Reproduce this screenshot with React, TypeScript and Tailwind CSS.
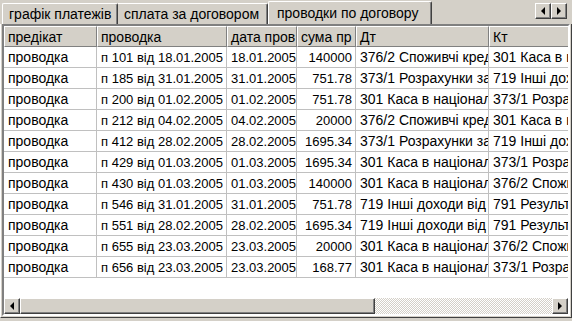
import React from 'react'

type Row = [string, string, string, string, string, string]

const rows: Row[] = [
  ['проводка', 'п 101 від 18.01.2005', '18.01.2005', '140000', '376/2 Споживчі кредити', '301 Каса в національній валюті'],
  ['проводка', 'п 185 від 31.01.2005', '31.01.2005', '751.78', '373/1 Розрахунки за', '719 Інші доходи від'],
  ['проводка', 'п 200 від 01.02.2005', '01.02.2005', '751.78', '301 Каса в національній', '373/1 Розрахунки'],
  ['проводка', 'п 212 від 04.02.2005', '04.02.2005', '20000', '376/2 Споживчі кредити', '301 Каса в національній'],
  ['проводка', 'п 412 від 28.02.2005', '28.02.2005', '1695.34', '373/1 Розрахунки за', '719 Інші доходи від'],
  ['проводка', 'п 429 від 01.03.2005', '01.03.2005', '1695.34', '301 Каса в національній', '373/1 Розрахунки'],
  ['проводка', 'п 430 від 01.03.2005', '01.03.2005', '140000', '301 Каса в національній', '376/2 Споживчі кредити'],
  ['проводка', 'п 546 від 31.01.2005', '31.01.2005', '751.78', '719 Інші доходи від операцій', '791 Результат'],
  ['проводка', 'п 551 від 28.02.2005', '28.02.2005', '1695.34', '719 Інші доходи від операцій', '791 Результат'],
  ['проводка', 'п 655 від 23.03.2005', '23.03.2005', '20000', '301 Каса в національній', '376/2 Споживчі кредити'],
  ['проводка', 'п 656 від 23.03.2005', '23.03.2005', '168.77', '301 Каса в національній', '373/1 Розрахунки'],
]

const headers = ['предікат', 'проводка', 'дата пров', 'сума пр', 'Дт', 'Кт']
const widths = ['w-[93px]', 'w-[130px]', 'w-[70px]', 'w-[59px]', 'w-[133px]', 'w-[90px]']
// кирилиця в оригіналі ширша за Arial, цифри вужчі
const sizes = ['text-[14px]', 'text-[13px]', 'text-[13px]', 'text-[13px]', 'text-[14px]', 'text-[14px]']

function Arrow({ dir }: { dir: 'left' | 'right' }) {
  return (
    <svg width="4" height="8" viewBox="0 0 4 8">
      {dir === 'left' ? <path d="M4 0 L0 4 L4 8 Z" fill="#000" /> : <path d="M0 0 L4 4 L0 8 Z" fill="#000" />}
    </svg>
  )
}

function Btn({ dir }: { dir: 'left' | 'right' }) {
  return (
    <div className="w-[16px] h-[16px] bg-[#d4d0c8] border border-t-white border-l-white border-r-[#404040] border-b-[#404040] shadow-[inset_-1px_-1px_0_#808080] flex items-center justify-center shrink-0">
      <Arrow dir={dir} />
    </div>
  )
}

export default function App() {
  return (
    <div className="w-[572px] h-[321px] bg-[#d4d0c8] overflow-hidden text-[13px] text-black font-['Liberation_Sans',Arial,sans-serif] leading-none">
      {/* вкладки */}
      <div className="h-[24px] flex items-end pl-[2px] text-[14px]">
        <div className="w-[116px] h-[21px] pl-[6px] flex items-center border-t border-l border-white border-r border-r-[#404040] rounded-tl-[2px] rounded-tr-[2px] shadow-[inset_-1px_0_0_#808080] whitespace-nowrap">
          графік платежів
        </div>
        <div className="w-[150px] h-[21px] pl-[6px] flex items-center border-t border-white border-r border-r-[#404040] rounded-tr-[2px] shadow-[inset_-1px_0_0_#808080] whitespace-nowrap">
          сплата за договором
        </div>
        <div className="w-[164px] h-[23px] pl-[8px] flex items-center border-t border-l border-white border-r border-r-[#404040] rounded-tl-[2px] rounded-tr-[2px] shadow-[inset_-1px_0_0_#808080] whitespace-nowrap">
          проводки по договору
        </div>
        <div className="flex-1" />
        <div className="flex self-start mt-[3px] mr-[5px]">
          <Btn dir="left" />
          <Btn dir="right" />
        </div>
      </div>

      {/* сторінка вкладки */}
      <div className="h-[294px] border-l border-white border-r border-r-[#404040] border-b border-b-[#404040] pl-[1px] pr-[1px] pb-[1px]">
        <div className="h-full border-2 border-t-[#808080] border-l-[#808080] border-r-white border-b-white bg-white flex flex-col overflow-hidden">
          <div className="flex-1 overflow-hidden">
            <div className="flex h-[21px] bg-[#d4d0c8] text-[14px]">
              {headers.map((h, i) => (
                <div
                  key={h}
                  className={`${widths[i]} shrink-0 h-full border-t border-l border-white border-r border-r-[#808080] border-b border-b-[#808080] pl-[3px] flex items-center overflow-hidden whitespace-nowrap`}
                >
                  {h}
                </div>
              ))}
            </div>
            {rows.map((r, ri) => (
              <div key={ri} className="flex h-[21px]">
                {r.map((c, ci) => (
                  <div
                    key={ci}
                    className={`${widths[ci]} ${sizes[ci]} shrink-0 h-full border-r border-b border-[#c0c0c0] flex items-center overflow-hidden whitespace-nowrap ${ci === 3 ? 'justify-end pr-[3px]' : 'pl-[4px]'}`}
                  >
                    {c}
                  </div>
                ))}
              </div>
            ))}
          </div>

          {/* горизонтальна прокрутка */}
          <div className="h-[16px] flex shrink-0">
            <Btn dir="left" />
            <div className="w-[355px] h-full bg-[#d4d0c8] border border-t-white border-l-white border-r-[#404040] border-b-[#404040] shadow-[inset_-1px_-1px_0_#808080]" />
            <div className="flex-1 h-full bg-[repeating-conic-gradient(#ffffff_0_25%,#d4d0c8_0_50%)] bg-[length:2px_2px]" />
            <Btn dir="right" />
          </div>
        </div>
      </div>
    </div>
  )
}
